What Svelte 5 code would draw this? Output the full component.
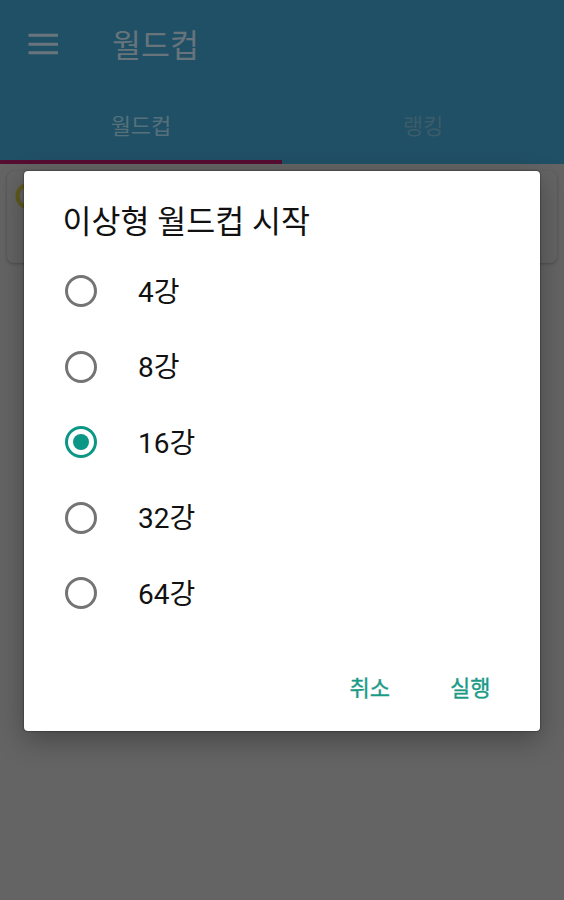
<script>
  const options = ['4강', '8강', '16강', '32강', '64강'];
  let selected = $state('16강');
</script>

<div class="screen">
  <header>
    <div class="toolbar">
      <svg class="menu" width="30" height="22" viewBox="0 0 30 22" aria-hidden="true">
        <path d="M0.5 2.3h30M0.5 11.2h30M0.5 19.8h30" stroke="#69757c" stroke-width="3" />
      </svg>
      <h1>월드컵</h1>
    </div>
    <nav>
      <div class="tab active">월드컵</div>
      <div class="tab">랭킹</div>
    </nav>
  </header>
  <main>
    <div class="card">
      <svg width="28" height="28" viewBox="0 0 28 28" aria-hidden="true">
        <circle cx="14" cy="14" r="11.5" fill="none" stroke="#5f5a1c" stroke-width="4" />
      </svg>
    </div>
  </main>

  <div class="dialog" role="dialog" aria-labelledby="title">
    <h2 id="title">이상형 월드컵 시작</h2>
    <div class="options" role="radiogroup">
      {#each options as option}
        <button class="option" role="radio" aria-checked={selected === option} onclick={() => (selected = option)}>
          <span class="radio" class:checked={selected === option}></span>
          <span class="label">{option}</span>
        </button>
      {/each}
    </div>
    <div class="actions">
      <button>취소</button>
      <button>실행</button>
    </div>
  </div>
</div>

<style>
  :global(body) {
    margin: 0;
  }
  .screen {
    position: relative;
    box-sizing: border-box;
    width: 564px;
    height: 900px;
    overflow: hidden;
    background: #646464;
    font-family: Roboto, 'Noto Sans CJK KR', sans-serif;
  }
  header {
    height: 164px;
    background: #205066;
  }
  .toolbar {
    display: flex;
    align-items: center;
    height: 88px;
    padding-left: 28px;
    gap: 54px;
  }
  h1 {
    margin: 0;
    padding-top: 5px;
    font-size: 31.5px;
    font-weight: 400;
    line-height: 40px;
    color: #68747b;
  }
  nav {
    display: flex;
    height: 76px;
  }
  .tab {
    box-sizing: border-box;
    flex: 1;
    height: 76px;
    text-align: center;
    font-size: 22px;
    line-height: 78px;
    color: #3d5b69;
  }
  .tab.active {
    color: #56707b;
    border-bottom: 4px solid #550d31;
  }
  .card {
    box-sizing: border-box;
    height: 92px;
    margin: 7px 7px 0;
    padding: 11px 8px;
    border-radius: 7px;
    background: #646464;
    box-shadow: 0 1px 3px rgba(0, 0, 0, 0.25);
  }
  .dialog {
    position: absolute;
    left: 24px;
    top: 171px;
    box-sizing: border-box;
    width: 516px;
    height: 560px;
    padding-top: 32px;
    border-radius: 4px;
    background: #fff;
    box-shadow: 0 0 2px rgba(0, 0, 0, 0.7), 0 9px 28px rgba(0, 0, 0, 0.3);
  }
  h2 {
    margin: 0 0 0 38.5px;
    font-size: 31.5px;
    font-weight: 400;
    line-height: 40px;
    color: #111;
  }
  .options {
    margin-top: 10.5px;
  }
  button {
    padding: 0;
    border: 0;
    background: none;
    font-family: inherit;
  }
  .option {
    display: flex;
    align-items: center;
    width: 100%;
    height: 75.5px;
    padding-left: 41px;
    gap: 41px;
    text-align: left;
  }
  .radio {
    display: flex;
    align-items: center;
    justify-content: center;
    box-sizing: border-box;
    width: 32px;
    height: 32px;
    border: 3px solid #747474;
    border-radius: 50%;
  }
  .radio.checked {
    border-color: #0b9685;
  }
  .radio.checked::after {
    content: '';
    width: 16px;
    height: 16px;
    border-radius: 50%;
    background: #0b9685;
  }
  .label {
    padding-top: 3px;
    font-size: 28px;
    line-height: 36px;
    color: #111;
  }
  .actions {
    display: flex;
    justify-content: flex-end;
    gap: 60px;
    margin: 42.5px 49.5px 0 0;
  }
  .actions button {
    font-size: 22px;
    font-weight: 400;
    line-height: 30px;
    color: #1b9a86;
    -webkit-text-stroke: 0.35px #1b9a86;
  }
</style>
